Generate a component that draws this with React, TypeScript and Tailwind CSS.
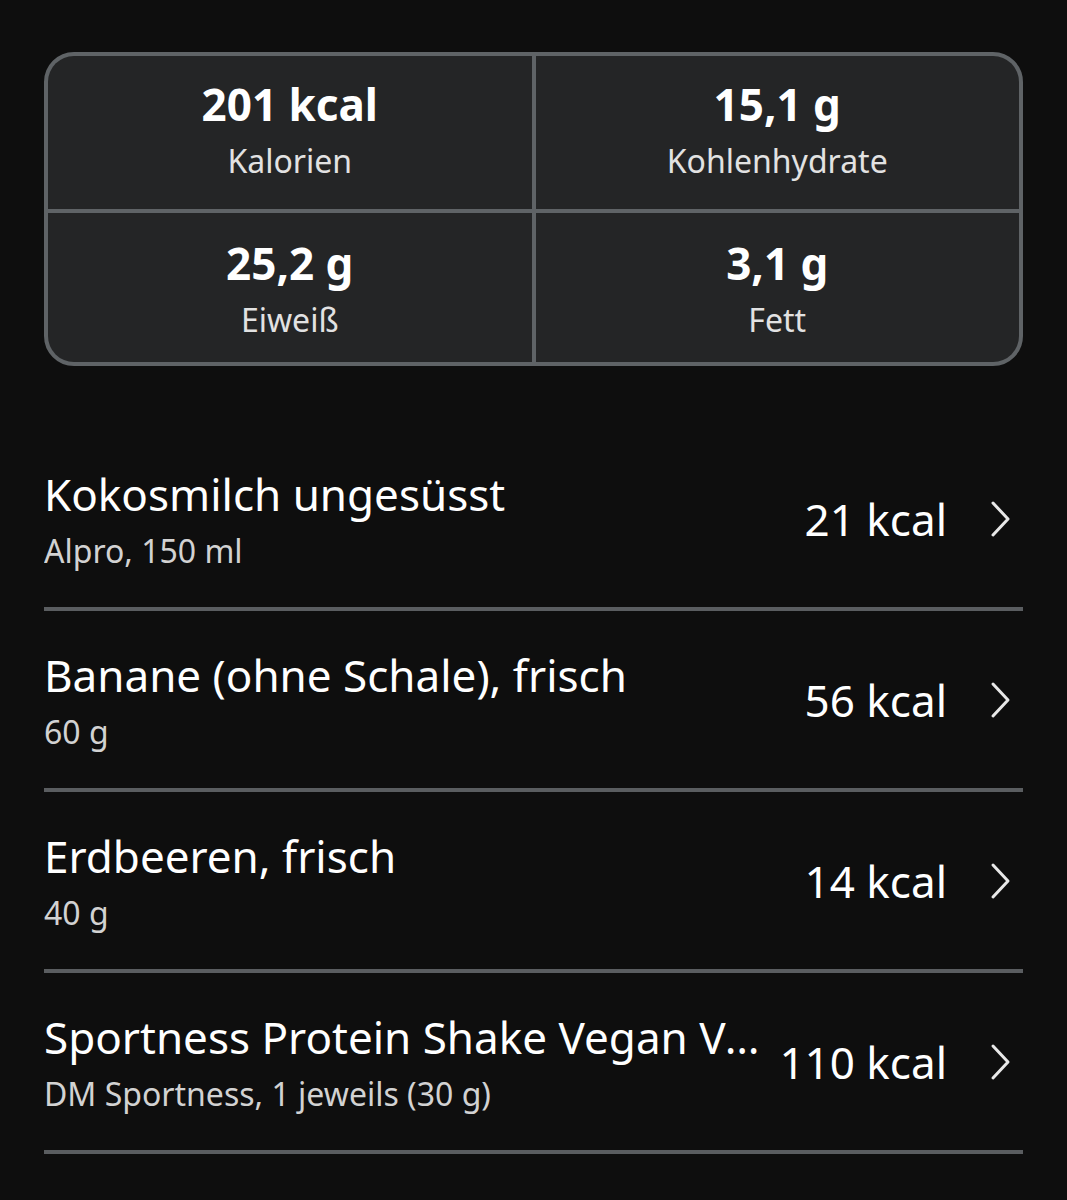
import React from 'react'

const stats = [
  { value: '201 kcal', label: 'Kalorien', cell: 'h-[153px] pt-[20px]' },
  { value: '15,1 g', label: 'Kohlenhydrate', cell: 'h-[153px] pt-[20px]' },
  { value: '25,2 g', label: 'Eiweiß', cell: 'h-[149px] pt-[22px]' },
  { value: '3,1 g', label: 'Fett', cell: 'h-[149px] pt-[22px]' },
]

const items = [
  { name: 'Kokosmilch ungesüsst', detail: 'Alpro, 150 ml', kcal: '21 kcal' },
  { name: 'Banane (ohne Schale), frisch', detail: '60 g', kcal: '56 kcal' },
  { name: 'Erdbeeren, frisch', detail: '40 g', kcal: '14 kcal' },
  { name: 'Sportness Protein Shake Vegan Vanille', detail: 'DM Sportness, 1 jeweils (30 g)', kcal: '110 kcal' },
]

const Chevron = () => (
  <svg width="26" height="40" viewBox="0 0 26 40" fill="none" className="text-[#e8e8e8]">
    <path d="M6 4 L21 20 L6 36" stroke="currentColor" strokeWidth="3" strokeLinecap="round" strokeLinejoin="round" />
  </svg>
)

export default function App() {
  return (
    <div className="min-h-[1200px] w-full bg-[#0e0e0e] px-[44px] pt-[52px] font-['Noto_Sans',sans-serif] text-white">
      <div className="overflow-hidden rounded-[30px] border-4 border-[#5f6366] bg-[#5f6366]">
        <div className="grid grid-cols-2 gap-[4px]">
          {stats.map((s) => (
            <div key={s.label} className={`${s.cell} flex flex-col items-center bg-[#242526]`}>
              <div className="text-[44px] font-bold leading-[56px] text-white">{s.value}</div>
              <div className="text-[32px] leading-[58px] text-[#e2e2e2]">{s.label}</div>
            </div>
          ))}
        </div>
      </div>

      <div className="mt-[64px]">
        {items.map((it) => (
          <div key={it.name} className="flex h-[181px] items-center gap-[12px] border-b-4 border-[#5a5d60]">
            <div className="mt-[5px] min-w-0 flex-1">
              <div className="truncate text-[44px] leading-[60px] text-white">{it.name}</div>
              <div className="truncate text-[32px] leading-[54px] text-[#d2d2d2]">{it.detail}</div>
            </div>
            <div className="flex items-center gap-[40px] pr-[10px]">
              <span className="text-[44px] leading-[60px] text-white">{it.kcal}</span>
              <Chevron />
            </div>
          </div>
        ))}
      </div>
    </div>
  )
}
